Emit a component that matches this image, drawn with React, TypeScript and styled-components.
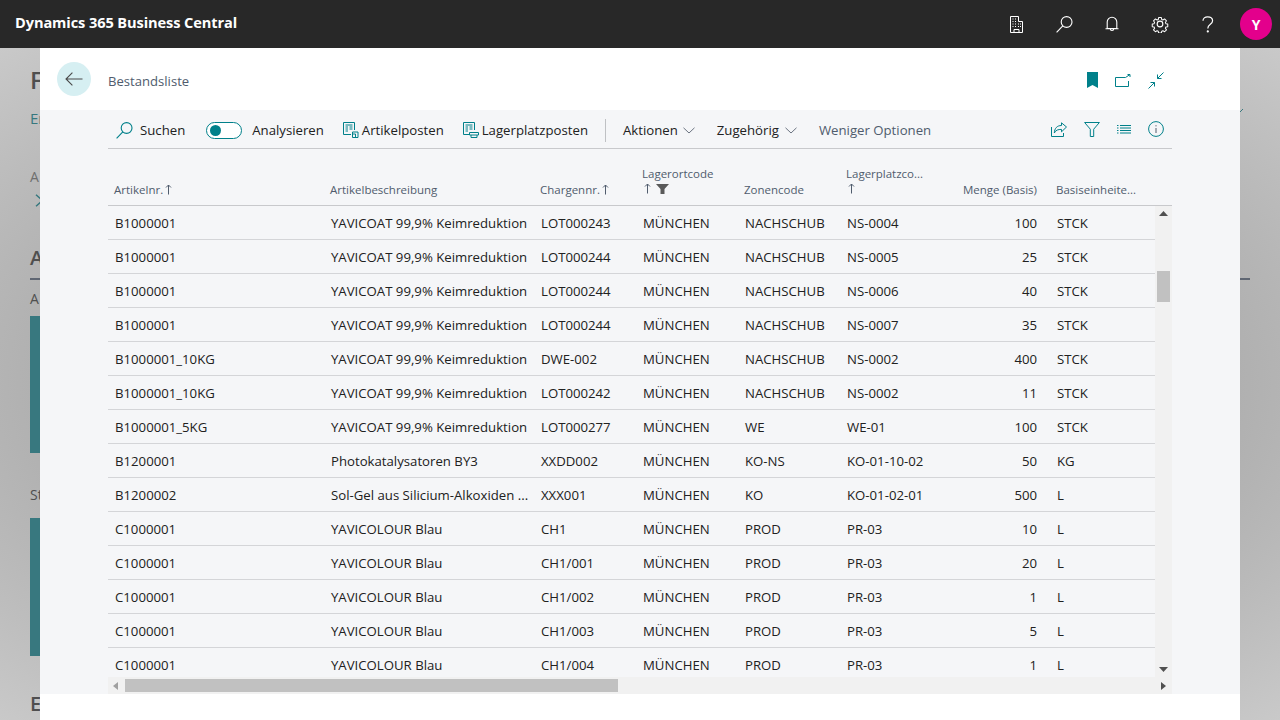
import React from 'react';
import styled, { createGlobalStyle } from 'styled-components';

const teal = '#00808a';
const fontStack = '"Open Sans", "Noto Sans", "Liberation Sans", sans-serif';

const GlobalStyle = createGlobalStyle`
  html, body {
    margin: 0;
    padding: 0;
    height: 720px;
    overflow: hidden;
    font-family: ${fontStack};
  }
  * { box-sizing: border-box; }
`;

const Shell = styled.div`
  position: relative;
  width: 1280px;
  height: 720px;
  overflow: hidden;
`;

const TopBar = styled.header`
  height: 48px;
  background: #282828;
  display: flex;
  align-items: center;
  padding: 0 8px 0 15px;
`;

const Brand = styled.div`
  flex: 1;
  color: #fff;
  font-size: 14.6px;
  font-weight: 700;
  letter-spacing: -0.1px;
  margin-top: -5px;
`;

const TopIcon = styled.div`
  width: 48px;
  height: 48px;
  display: flex;
  align-items: center;
  justify-content: center;
  color: #fff;
`;

const Avatar = styled.div`
  width: 32px;
  height: 32px;
  border-radius: 50%;
  background: #e3008c;
  color: #fff;
  font-size: 14px;
  font-weight: 700;
  display: flex;
  align-items: center;
  justify-content: center;
  margin-left: 8px;
`;

/* page dimmed behind the dialog */
const Behind = styled.main`
  height: 672px;
  padding: 0 30px;
  background: radial-gradient(ellipse at center, #969696 0%, #a8a8a8 55%, #c9c9c9 100%);
  color: #4f4f4f;
  overflow: hidden;
`;

const BehindTitle = styled.div`
  margin-top: 16px;
  font-size: 24px;
  line-height: 32px;
  font-weight: 600;
`;

const BehindLinkRow = styled.div`
  margin-top: 10px;
  height: 24px;
  display: flex;
  justify-content: space-between;
  color: #36787e;
  font-size: 15px;
  line-height: 24px;
`;

const BehindMark = styled.svg`
  margin: 3px 7px 0 0;
`;

const BehindLabel = styled.div`
  margin-top: 37px;
  font-size: 14px;
  line-height: 20px;
  color: #6e6e6e;
`;

const BehindChevron = styled.svg`
  display: block;
  margin: 7px 0 0 5px;
`;

const BehindHeading = styled.div<{ $top: number }>`
  margin-top: ${(p) => p.$top}px;
  font-size: 20px;
  line-height: 28px;
  font-weight: 600;
`;

const BehindRule = styled.div`
  height: 2px;
  margin-top: 6px;
  background: #5f6672;
`;

const BehindCaption = styled.div<{ $top: number }>`
  margin-top: ${(p) => p.$top}px;
  font-size: 14px;
  line-height: 20px;
`;

const BehindTile = styled.div<{ $top: number; $height: number }>`
  margin-top: ${(p) => p.$top}px;
  width: 120px;
  height: ${(p) => p.$height}px;
  background: #38787f;
`;

const Dialog = styled.section`
  position: absolute;
  top: 48px;
  left: 40px;
  width: 1200px;
  height: 672px;
  background: #fff;
  display: flex;
  flex-direction: column;
`;

const DialogHeader = styled.div`
  height: 62px;
  display: flex;
  align-items: center;
  padding: 0 76px 0 17px;
`;

const BackButton = styled.div`
  width: 34px;
  height: 34px;
  border-radius: 50%;
  background: #d6eff2;
  display: flex;
  align-items: center;
  justify-content: center;
  margin-top: -1px;
  color: #4a4a4a;
`;

const DialogTitle = styled.div`
  flex: 1;
  margin: 4px 0 0 17px;
  font-size: 13.1px;
  color: #505c6d;
`;

const HeaderIcons = styled.div`
  display: flex;
  align-items: center;
  gap: 17px;
  color: ${teal};
  margin-top: 2px;
`;

const Body = styled.div`
  height: 584px;
  background: #f5f6f8;
  padding: 0 68px;
`;

const Toolbar = styled.div`
  height: 39px;
  display: flex;
  align-items: center;
  border-bottom: 1px solid #c8c9cc;
  padding: 2px 0 0 8px;
  font-size: 13.2px;
  color: #212121;
`;

const ToolItem = styled.div<{ $gap?: number; $left?: number; $muted?: boolean }>`
  display: flex;
  align-items: center;
  gap: ${(p) => p.$gap ?? 4}px;
  margin-left: ${(p) => p.$left ?? 0}px;
  color: ${(p) => (p.$muted ? '#505c6d' : 'inherit')};
  white-space: nowrap;
  svg { flex: none; }
`;

const ToggleTrack = styled.div`
  width: 36px;
  height: 17px;
  border: 1px solid ${teal};
  border-radius: 9px;
  background: #fff;
  display: flex;
  align-items: center;
  padding-left: 3px;
`;

const ToggleKnob = styled.div`
  width: 11px;
  height: 11px;
  border-radius: 50%;
  background: ${teal};
`;

const Divider = styled.div`
  width: 1px;
  height: 23px;
  background: #bfc1c4;
  margin-left: 17px;
`;

const ToolIcons = styled.div`
  margin-left: auto;
  display: flex;
  align-items: center;
  gap: 17px;
  padding-right: 8px;
  margin-top: -2px;
  color: ${teal};
`;

const columns = '216px 210px 102px 102px 102px 102px 108px 105px';

const HeadRow = styled.div`
  display: grid;
  grid-template-columns: ${columns};
  height: 57px;
  border-bottom: 1px solid #c8c9cc;
`;

const HeadCell = styled.div<{ $right?: boolean; $stacked?: boolean }>`
  display: flex;
  flex-direction: column;
  justify-content: flex-end;
  padding: 0 ${(p) => (p.$right ? 13 : 6)}px ${(p) => (p.$stacked ? 9 : 8)}px 6px;
  font-size: 11.5px;
  line-height: 15px;
  color: #505c6d;
  white-space: nowrap;
  align-items: ${(p) => (p.$right ? 'flex-end' : 'flex-start')};
`;

const HeadLine = styled.div`
  display: flex;
  align-items: center;
  gap: 2px;
  height: 15px;
`;

const SortGroup = styled.div`
  display: flex;
  align-items: center;
  gap: 5px;
  height: 15px;
  padding-left: 2px;
`;

const TableFrame = styled.div`
  display: flex;
  height: 471px;
`;

const Rows = styled.div`
  width: 1047px;
  height: 471px;
  overflow: hidden;
`;

const Row = styled.div`
  display: grid;
  grid-template-columns: ${columns};
  height: 34px;
  border-bottom: 1px solid #d4d5d8;
`;

const Cell = styled.div<{ $right?: boolean }>`
  padding: 0 7px;
  padding-right: ${(p) => (p.$right ? '13px' : '7px')};
  font-size: 13.2px;
  line-height: 35px;
  color: #212121;
  white-space: nowrap;
  overflow: hidden;
  text-align: ${(p) => (p.$right ? 'right' : 'left')};
`;

const VScroll = styled.div`
  position: relative;
  width: 17px;
  background: #f1f1f1;
`;

const VThumb = styled.div`
  position: absolute;
  top: 65px;
  left: 2px;
  width: 13px;
  height: 31px;
  background: #c1c1c1;
`;

const Arrow = styled.svg<{ $top?: number; $bottom?: number; $left?: number; $right?: number }>`
  position: absolute;
  ${(p) => (p.$top !== undefined ? `top: ${p.$top}px;` : '')}
  ${(p) => (p.$bottom !== undefined ? `bottom: ${p.$bottom}px;` : '')}
  ${(p) => (p.$left !== undefined ? `left: ${p.$left}px;` : '')}
  ${(p) => (p.$right !== undefined ? `right: ${p.$right}px;` : '')}
`;

const HScroll = styled.div`
  position: relative;
  height: 17px;
  background: #f1f1f1;
`;

const HThumb = styled.div`
  position: absolute;
  top: 2px;
  left: 17px;
  width: 493px;
  height: 13px;
  background: #c1c1c1;
`;

type Rec = [string, string, string, string, string, string, string, string];

const yav = 'YAVICOAT 99,9% Keimreduktion';
const blau = 'YAVICOLOUR Blau';
const m = 'MÜNCHEN';

const data: Rec[] = [
  ['B1000001', yav, 'LOT000243', m, 'NACHSCHUB', 'NS-0004', '100', 'STCK'],
  ['B1000001', yav, 'LOT000244', m, 'NACHSCHUB', 'NS-0005', '25', 'STCK'],
  ['B1000001', yav, 'LOT000244', m, 'NACHSCHUB', 'NS-0006', '40', 'STCK'],
  ['B1000001', yav, 'LOT000244', m, 'NACHSCHUB', 'NS-0007', '35', 'STCK'],
  ['B1000001_10KG', yav, 'DWE-002', m, 'NACHSCHUB', 'NS-0002', '400', 'STCK'],
  ['B1000001_10KG', yav, 'LOT000242', m, 'NACHSCHUB', 'NS-0002', '11', 'STCK'],
  ['B1000001_5KG', yav, 'LOT000277', m, 'WE', 'WE-01', '100', 'STCK'],
  ['B1200001', 'Photokatalysatoren BY3', 'XXDD002', m, 'KO-NS', 'KO-01-10-02', '50', 'KG'],
  ['B1200002', 'Sol-Gel aus Silicium-Alkoxiden ...', 'XXX001', m, 'KO', 'KO-01-02-01', '500', 'L'],
  ['C1000001', blau, 'CH1', m, 'PROD', 'PR-03', '10', 'L'],
  ['C1000001', blau, 'CH1/001', m, 'PROD', 'PR-03', '20', 'L'],
  ['C1000001', blau, 'CH1/002', m, 'PROD', 'PR-03', '1', 'L'],
  ['C1000001', blau, 'CH1/003', m, 'PROD', 'PR-03', '5', 'L'],
  ['C1000001', blau, 'CH1/004', m, 'PROD', 'PR-03', '1', 'L'],
];

const SortUp = () => (
  <svg width="7" height="11" viewBox="0 0 7 11" fill="none" stroke="currentColor" strokeWidth="1">
    <path d="M3.5 10.5V1M1 3.5 3.5 1 6 3.5" />
  </svg>
);

const HeadFilter = () => (
  <svg width="13" height="10" viewBox="0 0 13 10" fill="#5a5a5a">
    <path d="M0 0h13L8.5 5v5h-4V5z" />
  </svg>
);

const SearchIcon = ({ size, color }: { size: number; color: string }) => (
  <svg width={size} height={size} viewBox="0 0 17 17" fill="none" stroke={color} strokeWidth="1.1">
    <circle cx="10.6" cy="6" r="5.4" />
    <path d="M6.8 9.8.6 16.4" />
  </svg>
);

const BuildingIcon = () => (
  <svg width="13" height="17" viewBox="0 0 13 17" fill="none" stroke="currentColor" strokeWidth="1">
    <path d="M.5 16.5V.5h8v5h4v11z" />
    <path d="M4 16.5v-3h5v3" />
    <path d="M2.5 3h1M5 3h1M2.5 5.5h1M5 5.5h1M2.5 8h1M5 8h1M8 8h1M10 8h1M2.5 10.5h1M5 10.5h1M8 10.5h1M10 10.5h1" />
  </svg>
);

const BellIcon = () => (
  <svg width="14" height="16" viewBox="0 0 14 16" fill="none" stroke="currentColor" strokeWidth="1.1">
    <path d="M2.2 12.5V6a4.8 4.8 0 0 1 9.6 0v6.5z" />
    <path d="M.5 12.7h13M5.3 13c0 2 3.4 2 3.4 0" />
  </svg>
);

const GearIcon = () => (
  <svg width="18" height="18" viewBox="0 0 24 24" fill="none" stroke="currentColor" strokeWidth="1.5" strokeLinejoin="round">
    <path d="M10 2.5h4l.6 2.9 1.7.7 2.5-1.6 2.8 2.8-1.6 2.5.7 1.7 2.8.6v3.8l-2.8.6-.7 1.7 1.6 2.5-2.8 2.8-2.5-1.6-1.7.7-.6 2.9h-4l-.6-2.9-1.7-.7-2.5 1.6-2.8-2.8 1.6-2.5-.7-1.7-2.8-.6v-3.8l2.8-.6.7-1.7-1.6-2.5 2.8-2.8 2.5 1.6 1.7-.7z" transform="translate(1.2 1.2) scale(0.9)" />
    <circle cx="12" cy="12" r="3.8" />
  </svg>
);

const HelpIcon = () => (
  <svg width="12" height="17" viewBox="0 0 12 17" fill="none" stroke="currentColor" strokeWidth="1.2">
    <path d="M1 4.8C1 2.3 3 .8 5.6.8c2.8 0 5 1.6 5 4 0 3.6-4.8 3.4-4.8 7.6" />
    <circle cx="5.8" cy="15.4" r=".5" fill="currentColor" />
  </svg>
);

const BackArrow = () => (
  <svg width="18" height="14" viewBox="0 0 18 14" fill="none" stroke="currentColor" strokeWidth="1.1">
    <path d="M17.5 7H1M7.4.6 1 7l6.4 6.4" />
  </svg>
);

const BookmarkIcon = () => (
  <svg width="11" height="16" viewBox="0 0 11 16" fill="currentColor">
    <path d="M0 0h11v16L5.5 13 0 16z" />
  </svg>
);

const OpenIcon = () => (
  <svg width="16" height="13" viewBox="0 0 16 13" fill="none" stroke="currentColor" strokeWidth="1">
    <path d="M10.5 3.5H.5v9h13V7" />
    <path d="M10.5 3.5 15 .5M12.5.5H15V3" />
  </svg>
);

const CollapseIcon = () => (
  <svg width="16" height="17" viewBox="0 0 16 17" fill="none" stroke="currentColor" strokeWidth="1">
    <path d="M15.5.5 9.5 6.5M9.5 2.5v4h4M.5 16.5l6-6M2.5 10.5h4v4" />
  </svg>
);

const ShareIcon = () => (
  <svg width="16" height="15" viewBox="0 0 16 15" fill="none" stroke="currentColor" strokeWidth="1">
    <path d="M.5 5v9.5h12V11" />
    <path d="M15.5 5 10.5.8v2.7C6 3.5 3.6 6.3 3.3 11c1.5-3 3.8-3.6 7.2-3.6v2.4z" />
  </svg>
);

const FunnelIcon = () => (
  <svg width="16" height="15" viewBox="0 0 16 15" fill="none" stroke="currentColor" strokeWidth="1">
    <path d="M.6.5h14.8L9.7 7.2v7.3H6.3V7.2z" />
  </svg>
);

const ListIcon = () => (
  <svg width="14" height="11" viewBox="0 0 14 11" fill="none" stroke="currentColor" strokeWidth="1">
    <path d="M0 1.5h1.5M3 1.5h11M0 4h1.5M3 4h11M0 6.5h1.5M3 6.5h11M0 9h1.5M3 9h11" />
  </svg>
);

const InfoIcon = () => (
  <svg width="16" height="16" viewBox="0 0 16 16" fill="none" stroke="currentColor" strokeWidth="1">
    <circle cx="8" cy="8" r="7.4" />
    <path d="M8 7v5" stroke="#505c6d" />
    <path d="M8 4.2v1.2" stroke="#505c6d" />
  </svg>
);

const LedgerIcon = ({ wide }: { wide?: boolean }) => (
  <svg width="16" height="16" viewBox="0 0 16 16" fill="none" stroke={teal} strokeWidth="1">
    <path d="M8 12.5H.5V.5h11V8" />
    <path d="M2.5 3h7M2.5 5h2.5M6.5 5h3M2.5 7h2.5M6.5 7h3M2.5 9h2.5" />
    {wide ? (
      <path d="M6.5 10.5h9v2.5h-9zM8 13v2.5h6V13" fill="#f5f6f8" />
    ) : (
      <path d="M9.5 10h5.5v5.5H9.5zM9.5 12h3v3.5" fill="#f5f6f8" />
    )}
  </svg>
);

const Chevron = () => (
  <svg width="12" height="7" viewBox="0 0 12 7" fill="none" stroke="#6b7380" strokeWidth="1">
    <path d="M.5.8 6 6l5.5-5.2" />
  </svg>
);

export default function App() {
  return (
    <Shell>
      <GlobalStyle />
      <TopBar>
        <Brand>Dynamics 365 Business Central</Brand>
        <TopIcon><BuildingIcon /></TopIcon>
        <TopIcon><SearchIcon size={17} color="#fff" /></TopIcon>
        <TopIcon><BellIcon /></TopIcon>
        <TopIcon><GearIcon /></TopIcon>
        <TopIcon><HelpIcon /></TopIcon>
        <Avatar>Y</Avatar>
      </TopBar>

      <Behind>
        <BehindTitle>F</BehindTitle>
        <BehindLinkRow>
          <span>Er</span>
          <BehindMark width="4" height="4" viewBox="0 0 4 4" fill="none" stroke="#36787e" strokeWidth="1">
            <path d="M0 4 4 0" />
          </BehindMark>
        </BehindLinkRow>
        <BehindLabel>A</BehindLabel>
        <BehindChevron width="9" height="13" viewBox="0 0 9 13" fill="none" stroke="#36787e" strokeWidth="1.5">
          <path d="M1 .8 7.5 6.5 1 12.2" />
        </BehindChevron>
        <BehindHeading $top={37}>A</BehindHeading>
        <BehindRule />
        <BehindCaption $top={9}>A</BehindCaption>
        <BehindTile $top={7} $height={137} />
        <BehindCaption $top={32}>St</BehindCaption>
        <BehindTile $top={13} $height={138} />
        <BehindHeading $top={34}>E</BehindHeading>
      </Behind>

      <Dialog>
        <DialogHeader>
          <BackButton><BackArrow /></BackButton>
          <DialogTitle>Bestandsliste</DialogTitle>
          <HeaderIcons>
            <BookmarkIcon />
            <OpenIcon />
            <CollapseIcon />
          </HeaderIcons>
        </DialogHeader>

        <Body>
          <Toolbar>
            <ToolItem $gap={7}><SearchIcon size={17} color={teal} />Suchen</ToolItem>
            <ToolItem $gap={10} $left={21}><ToggleTrack><ToggleKnob /></ToggleTrack>Analysieren</ToolItem>
            <ToolItem $gap={3} $left={19}><LedgerIcon />Artikelposten</ToolItem>
            <ToolItem $gap={3} $left={19}><LedgerIcon wide />Lagerplatzposten</ToolItem>
            <Divider />
            <ToolItem $gap={5} $left={17}>Aktionen<Chevron /></ToolItem>
            <ToolItem $gap={6} $left={22}>Zugehörig<Chevron /></ToolItem>
            <ToolItem $left={22} $muted>Weniger Optionen</ToolItem>
            <ToolIcons>
              <ShareIcon />
              <FunnelIcon />
              <ListIcon />
              <InfoIcon />
            </ToolIcons>
          </Toolbar>

          <HeadRow>
            <HeadCell><HeadLine>Artikelnr. <SortUp /></HeadLine></HeadCell>
            <HeadCell><HeadLine>Artikelbeschreibung</HeadLine></HeadCell>
            <HeadCell><HeadLine>Chargennr. <SortUp /></HeadLine></HeadCell>
            <HeadCell $stacked>
              <HeadLine>Lagerortcode</HeadLine>
              <SortGroup><SortUp /><HeadFilter /></SortGroup>
            </HeadCell>
            <HeadCell><HeadLine>Zonencode</HeadLine></HeadCell>
            <HeadCell $stacked>
              <HeadLine>Lagerplatzco...</HeadLine>
              <SortGroup><SortUp /></SortGroup>
            </HeadCell>
            <HeadCell $right><HeadLine>Menge (Basis)</HeadLine></HeadCell>
            <HeadCell><HeadLine>Basiseinheite...</HeadLine></HeadCell>
          </HeadRow>

          <TableFrame>
            <Rows>
              {data.map((rec, i) => (
                <Row key={i}>
                  {rec.map((value, c) => (
                    <Cell key={c} $right={c === 6}>{value}</Cell>
                  ))}
                </Row>
              ))}
            </Rows>
            <VScroll>
              <Arrow $top={5} $left={4} width="9" height="5" viewBox="0 0 9 5" fill="#505050"><path d="M4.5 0 9 5H0z" /></Arrow>
              <VThumb />
              <Arrow $bottom={5} $left={4} width="9" height="5" viewBox="0 0 9 5" fill="#505050"><path d="M4.5 5 9 0H0z" /></Arrow>
            </VScroll>
          </TableFrame>
          <HScroll>
            <Arrow $top={5} $left={5} width="5" height="8" viewBox="0 0 5 8" fill="#a0a0a0"><path d="M0 4 5 0v8z" /></Arrow>
            <HThumb />
            <Arrow $top={5} $right={6} width="5" height="8" viewBox="0 0 5 8" fill="#505050"><path d="M5 4 0 0v8z" /></Arrow>
          </HScroll>
        </Body>
      </Dialog>
    </Shell>
  );
}
